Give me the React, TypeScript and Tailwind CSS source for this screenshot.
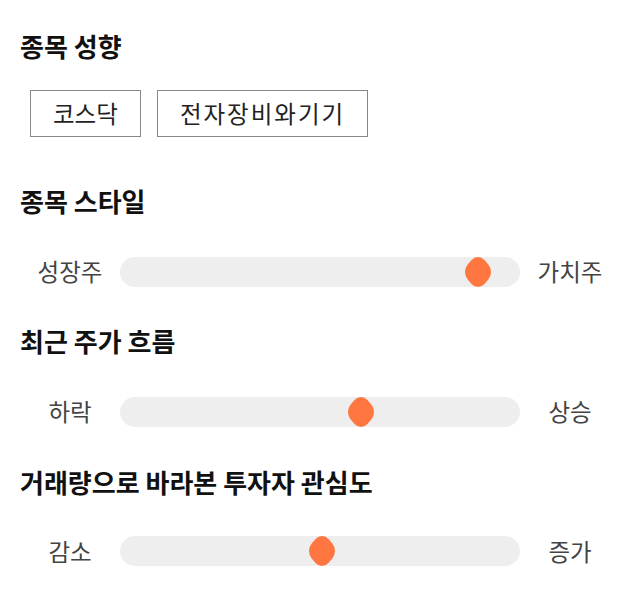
const font = { fontFamily: '"Noto Sans CJK KR", "Noto Sans", sans-serif' };

interface SliderRowProps {
  left: string;
  right: string;
  pos: number;
}

const Thumb = () => (
  <svg width="26" height="30" viewBox="-10 -10 20 20" preserveAspectRatio="none">
    <rect x="-9.12" y="-9.12" width="18.24" height="18.24" rx="7" fill="#ff7640" transform="rotate(45)" />
  </svg>
);

const SliderRow = ({ left, right, pos }: SliderRowProps) => (
  <div className="flex items-center">
    <div className="w-[100px] text-center text-[23.5px] text-[#444]">{left}</div>
    <div className="relative h-[30px] flex-1 rounded-full bg-[#eeeeee]">
      <div className="absolute top-1/2 -translate-x-1/2 -translate-y-1/2 leading-none" style={{ left: `${pos}px` }}>
        <Thumb />
      </div>
    </div>
    <div className="w-[100px] text-center text-[23.5px] text-[#444]">{right}</div>
  </div>
);

export default function App() {
  return (
    <div className="w-[640px] bg-white px-5 pt-[28px] text-[#111]" style={font}>
      <h2 className="text-[26px] font-bold leading-[36px]">종목 성향</h2>
      <div className="mt-[26px] flex gap-4 pl-[10px]">
        <span className="border border-[#888] px-[22px] py-[5px] text-[23.5px] leading-[35px] text-[#222]">코스닥</span>
        <span className="border border-[#888] px-[22px] py-[5px] text-[23.5px] leading-[35px] tracking-[2px] text-[#222]">전자장비와기기</span>
      </div>

      <h2 className="mt-[46px] text-[26px] font-bold leading-[36px]">종목 스타일</h2>
      <div className="mt-[35px]">
        <SliderRow left="성장주" right="가치주" pos={358} />
      </div>

      <h2 className="mt-[34px] text-[26px] font-bold leading-[36px]">최근 주가 흐름</h2>
      <div className="mt-[35px]">
        <SliderRow left="하락" right="상승" pos={241} />
      </div>

      <h2 className="mt-[34px] text-[26px] font-bold leading-[36px]">거래량으로 바라본 투자자 관심도</h2>
      <div className="mt-[34px]">
        <SliderRow left="감소" right="증가" pos={202} />
      </div>
    </div>
  );
}
